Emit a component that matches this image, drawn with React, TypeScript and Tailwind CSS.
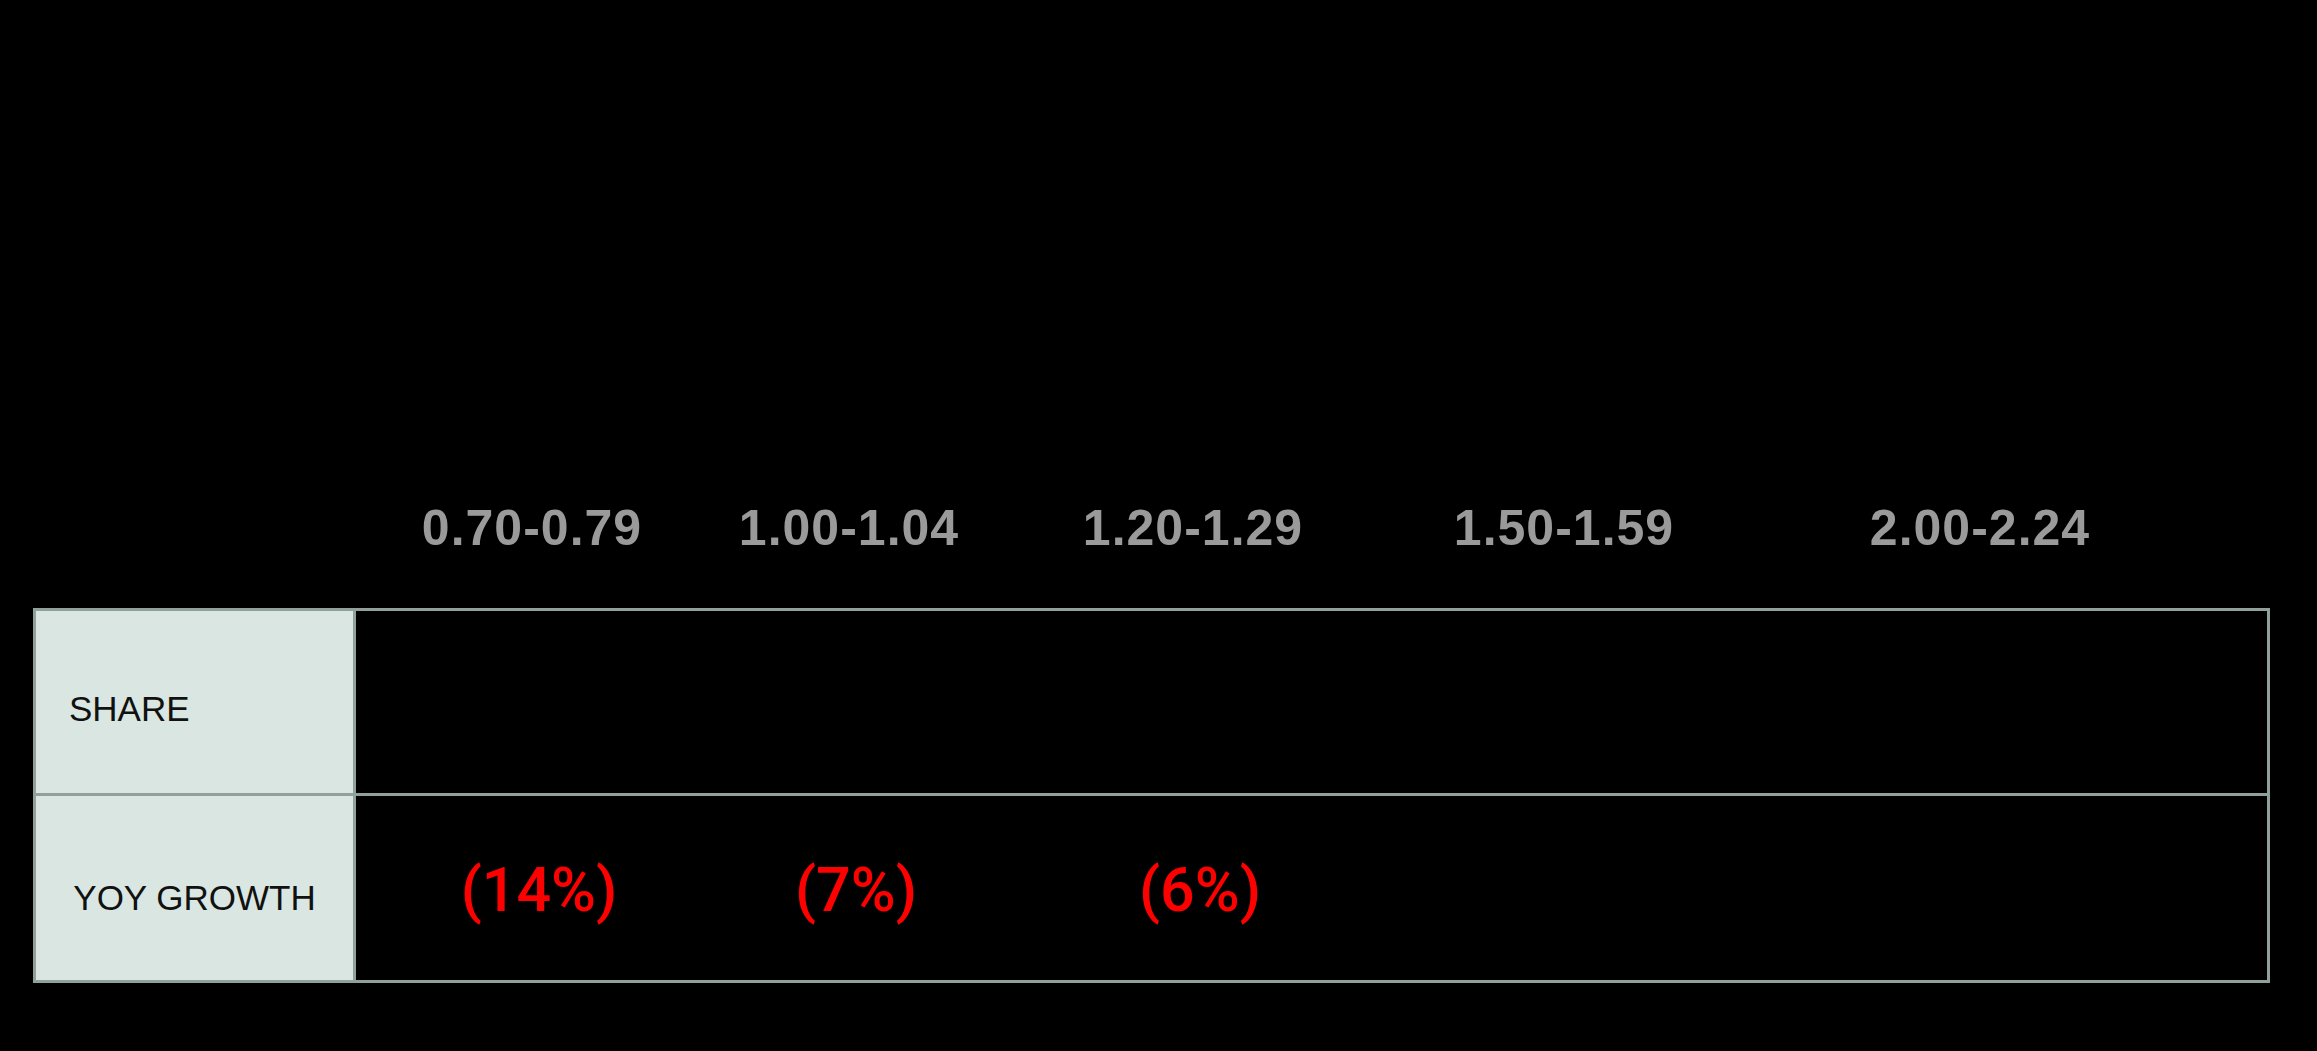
const headers = ["0.70-0.79", "1.00-1.04", "1.20-1.29", "1.50-1.59", "2.00-2.24"];
const growth = ["(14%)", "(7%)", "(6%)", "", ""];

const cols = "grid grid-cols-[352px_282px_406px_336px_496px]";

export default function App() {
  return (
    <div className="min-h-screen bg-black pl-[33px] pr-[47px] pt-[503px] font-['Liberation_Sans',Arial,sans-serif]">
      <div className="flex">
        <div className="w-[323px] shrink-0" />
        <div className={`${cols} flex-1`}>
          {headers.map((h) => (
            <div
              key={h}
              className="text-center text-[50px] leading-none font-bold tracking-[1px] text-[#9a9a9a]"
            >
              {h}
            </div>
          ))}
        </div>
      </div>

      <div className="mt-[55px] border-[3px] border-[#8fa19a]">
        <div className="flex h-[185px] border-b-[3px] border-[#8fa19a]">
          <div className="w-[320px] shrink-0 border-r-[3px] border-[#8fa19a] bg-[#d9e6e1] flex items-center pl-[33px] pt-[13px] text-[35px] leading-none text-[#111]">
            SHARE
          </div>
          <div className={`${cols} flex-1`}>
            {headers.map((h) => (
              <div key={h} />
            ))}
          </div>
        </div>
        <div className="flex h-[184px]">
          <div className="w-[320px] shrink-0 border-r-[3px] border-[#8fa19a] bg-[#d9e6e1] flex items-center justify-center pt-[18px] text-[35px] leading-none text-[#111]">
            YOY GROWTH
          </div>
          <div className={`${cols} flex-1`}>
            {growth.map((g, i) => (
              <div
                key={i}
                className="flex items-center justify-center pl-[14px] pt-[4px] font-['Roboto',sans-serif] text-[61px] leading-none font-medium text-[#ff0000]"
              >
                {g}
              </div>
            ))}
          </div>
        </div>
      </div>
    </div>
  );
}
